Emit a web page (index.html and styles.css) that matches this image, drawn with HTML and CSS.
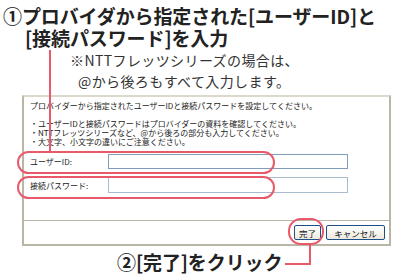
FILE: index.html
```html
<!DOCTYPE html>
<html lang="ja">
<head>
    <meta charset="UTF-8">
    <title>ユーザーID設定</title>
    <link rel="stylesheet" href="styles.css">
</head>
<body>
    <div class="page">
        <h1 class="step">①プロバイダから指定された[ユーザーID]と<br>[接続パスワード]を入力</h1>
        <div class="note">
            <div>※NTTフレッツシリーズの場合は、</div>
            <div class="note-sub">@から後ろもすべて入力します。</div>
        </div>

        <div class="dialog">
            <div class="dialog-body">
                <p class="lead">プロバイダーから指定されたユーザーIDと接続パスワードを設定してください。</p>
                <ul class="hints">
                    <li>・ユーザーIDと接続パスワードはプロバイダーの資料を確認してください。</li>
                    <li>・NTTフレッツシリーズなど、@から後ろの部分も入力してください。</li>
                    <li>・大文字、小文字の違いにご注意ください。</li>
                </ul>
                <div class="row">
                    <label for="userId">ユーザーID:</label>
                    <input type="text" id="userId" class="field">
                </div>
                <div class="row">
                    <label for="password">接続パスワード:</label>
                    <input type="password" id="password" class="field field-light">
                </div>
            </div>
            <div class="dialog-footer">
                <button class="btn btn-ok">完了</button>
                <button class="btn btn-cancel">キャンセル</button>
            </div>
        </div>

        <div class="step step-2">②[完了]をクリック</div>

        <!-- callouts -->
        <div class="mark mark-line"></div>
        <div class="mark mark-oval oval-id"></div>
        <div class="mark mark-oval oval-pw"></div>
        <div class="mark mark-circle"></div>
        <div class="mark mark-elbow"></div>
    </div>
</body>
</html>
```

FILE: styles.css
```css
body {
    margin: 0;
    background-color: #fff;
    color: #222;
    font-family: "Noto Sans CJK JP", "Liberation Sans", sans-serif;
}

.page {
    position: relative;
    width: 412px;
    height: 280px;
    overflow: hidden;
}

.step {
    margin: 0;
    padding: 5px 0 0 25px;
    text-indent: -22px;
    font-size: 19px;
    font-weight: bold;
    line-height: 22px;
    letter-spacing: -0.1px;
}

.step-2 {
    height: 22px;
    margin-top: 5px;
    padding: 0 0 0 117px;
    text-indent: 0;
}

.note {
    height: 42px;
    padding: 1px 0 0 70px;
    font-size: 14px;
    line-height: 21px;
    letter-spacing: 0.4px;
    color: #333;
}

.note .note-sub {
    padding-left: 8px;
}

/* Dialog */
.dialog {
    box-sizing: border-box;
    margin: 3px 0 0 22px;
    width: 369px;
    height: 151px;
    border: 2px solid #b9b6a6;
    border-top-color: #dcd9cc;
    display: flex;
    flex-direction: column;
    font-size: 8px;
    color: #1a1a1a;
    overflow: hidden;
}

.dialog-body {
    flex: 1;
    padding: 4px 0 0 6px;
}

.lead {
    height: 9px;
    margin: 0 0 9px;
    line-height: 9px;
    white-space: nowrap;
}

.hints {
    list-style: none;
    margin: 0;
    padding: 0;
}

.hints li {
    height: 9px;
    line-height: 9px;
    white-space: nowrap;
}

.row {
    display: flex;
    align-items: center;
    height: 24px;
}

.hints + .row {
    margin-top: 3px;
}

.row label {
    width: 78px;
}

.field {
    box-sizing: border-box;
    width: 240px;
    height: 15px;
    margin: 0;
    padding: 0;
    border: 1px solid #7f9db9;
    background: #fff;
}

.field-light {
    height: 16px;
    border-color: #a7bccf;
}

.dialog-footer {
    box-sizing: border-box;
    height: 24px;
    border-top: 1px solid #b9b6a6;
    display: flex;
    justify-content: flex-end;
    align-items: center;
    gap: 5px;
    padding-right: 4px;
}

.btn {
    box-sizing: border-box;
    height: 15px;
    padding: 0;
    border: 1px solid #1c4f86;
    border-radius: 2px;
    background: linear-gradient(#ffffff, #ece9df);
    font-family: inherit;
    font-size: 8.5px;
    line-height: 12px;
    color: #111;
}

.btn-ok {
    width: 27px;
}

.btn-cancel {
    width: 59px;
}

/* Callout marks */
.mark {
    position: absolute;
    box-sizing: border-box;
}

.mark-line {
    left: 49px;
    top: 50px;
    width: 2px;
    height: 102px;
    background-color: #e85a6a;
}

.mark-oval {
    left: 17px;
    width: 258px;
    height: 23px;
    border: 2px solid #e85a6a;
    border-radius: 12px;
}

.oval-id {
    top: 151px;
}

.oval-pw {
    top: 176px;
}

.mark-circle {
    left: 288px;
    top: 218px;
    width: 36px;
    height: 27px;
    border: 2px solid #e85a6a;
    border-radius: 13px;
}

.mark-elbow {
    left: 285px;
    top: 244px;
    width: 26px;
    height: 21px;
    border-right: 2px solid #e85a6a;
    border-bottom: 2px solid #e85a6a;
}
```
